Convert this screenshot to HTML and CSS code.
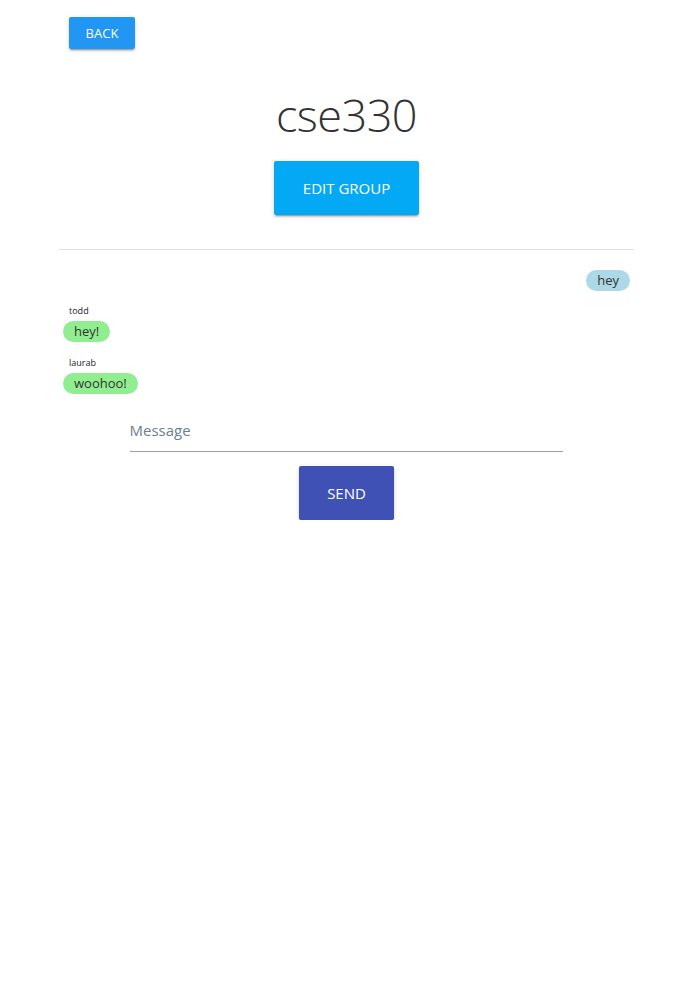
FILE: index.html
```html
<!DOCTYPE html>
<html>
<head>
<meta charset="utf-8">
<link rel="stylesheet" href="styles.css">
</head>
<body>
<div class="page">
  <div class="top">
    <button class="btn btn-back">BACK</button>
  </div>
  <h1 class="title">cse330</h1>
  <div class="center">
    <button class="btn btn-edit">EDIT GROUP</button>
  </div>
  <hr class="divider">
  <div class="messages">
    <div class="msg mine">
      <span class="bubble blue">hey</span>
    </div>
    <div class="msg theirs">
      <div class="author">todd</div>
      <span class="bubble green">hey!</span>
    </div>
    <div class="msg theirs">
      <div class="author">laurab</div>
      <span class="bubble green">woohoo!</span>
    </div>
  </div>
  <div class="composer">
    <div class="field">
      <input class="input" type="text" placeholder="Message">
    </div>
    <button class="btn btn-send">SEND</button>
  </div>
</div>
</body>
</html>
```
FILE: styles.css
```css
html, body {
  margin: 0;
  padding: 0;
  background: #fff;
}
body {
  font-family: "Open Sans", "Noto Sans", sans-serif;
  color: #333;
}
.page {
  width: 575px;
  margin-left: 59px;
  padding-top: 17px;
}
.top {
  padding-left: 10px;
  display: flex;
}
.btn {
  border: none;
  border-radius: 2px;
  color: #fff;
  font-family: "Open Sans", "Noto Sans", sans-serif;
  box-shadow: 0 2px 2px rgba(0,0,0,0.14), 0 1px 5px rgba(0,0,0,0.12), 0 3px 1px -2px rgba(0,0,0,0.2);
  cursor: pointer;
  text-transform: uppercase;
}
.btn-back {
  background: #2196f3;
  width: 66px;
  height: 32px;
  font-size: 13px;
  padding: 0;
}
.title {
  margin: 37px 0 0 0;
  text-align: center;
  font-size: 45px;
  font-weight: 300;
  line-height: 58px;
  color: #333;
  letter-spacing: -0.5px;
}
.center {
  display: flex;
  justify-content: center;
  margin-top: 17px;
}
.btn-edit {
  background: #03a9f4;
  width: 145px;
  height: 54px;
  font-size: 15px;
  padding: 0;
}
.divider {
  border: none;
  border-top: 1px solid #e0e0e0;
  margin: 34px 0 0 0;
  height: 0;
}
.messages {
  padding: 20px 4px 0 4px;
  display: flex;
  flex-direction: column;
}
.msg {
  display: flex;
  flex-direction: column;
}
.mine {
  align-items: flex-end;
}
.theirs {
  align-items: flex-start;
  margin-top: 14px;
}
.theirs + .theirs {
  margin-top: 15px;
}
.author {
  font-size: 9px;
  line-height: 12px;
  padding-left: 6px;
  margin-bottom: 4px;
  color: #222;
}
.bubble {
  display: inline-block;
  font-size: 13px;
  line-height: 21px;
  padding: 0 11px;
  border-radius: 11px;
  color: #333;
}
.blue {
  background: #add8e6;
}
.green {
  background: #90ee90;
}
.composer {
  display: flex;
  flex-direction: column;
  align-items: center;
  margin-top: 21px;
}
.field {
  width: 433px;
  margin-left: -1px;
}
.input {
  width: 100%;
  box-sizing: border-box;
  border: none;
  border-bottom: 1px solid #9e9e9e;
  font-family: "Open Sans", "Noto Sans", sans-serif;
  font-size: 15px;
  height: 37px;
  padding: 0 0 6px 0;
  outline: none;
  color: #333;
}
.input::placeholder {
  color: #6b7f91;
}
.btn-send {
  background: #3f51b5;
  width: 95px;
  height: 54px;
  font-size: 15px;
  padding: 0;
  margin-top: 14px;
}
```
